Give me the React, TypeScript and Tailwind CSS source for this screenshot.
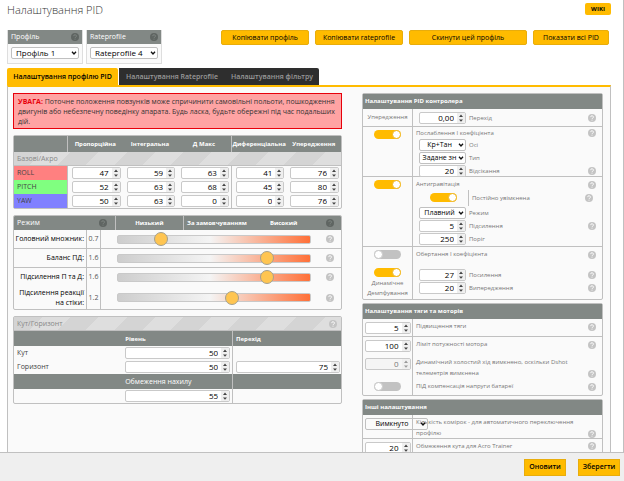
import React from "react";

function Help({ dark = false }: { dark?: boolean }) {
  return (
    <svg viewBox="0 0 16 16" className="block size-2 shrink-0" aria-hidden="true">
      <circle cx="8" cy="8" r="8" fill={dark ? "#5f6562" : "#c4c4c4"} />
      <path
        d="M5.4 6.2a2.7 2.5 0 1 1 4 2.1c-.9.5-1.3.8-1.3 1.6M8 11.4v1.8"
        fill="none"
        stroke={dark ? "#828885" : "#ffffff"}
        strokeWidth="1.9"
      />
    </svg>
  );
}

type NumProps = { id?: string; label?: string; value: string; size?: string; disabled?: boolean };

function Num({ id, label, value, size = "w-full", disabled = false }: NumProps) {
  return (
    <span
      className={`flex h-3 shrink-0 overflow-hidden rounded-xs border border-[#c9c9c9] ${size} ${
        disabled ? "bg-[#f5f5f5] text-[#777]" : "bg-white text-black"
      }`}
    >
      <input
        id={id}
        aria-label={label}
        type="text"
        inputMode="decimal"
        defaultValue={value}
        disabled={disabled}
        className="w-0 min-w-0 flex-1 bg-transparent pr-[3px] text-right text-[8px] leading-[10px] outline-none"
      />
      <svg viewBox="0 0 8 10" className="h-full w-2 bg-[#efefef]" aria-hidden="true">
        <path d="M2 4L4 1.6L6 4zM2 6.4L4 8.8L6 6.4z" fill={disabled ? "#999" : "#444"} />
      </svg>
    </span>
  );
}

type PickProps = { id: string; value: string; size?: string; look?: string };

function Pick({ id, value, size = "w-full", look = "bg-white pl-1 text-left text-[8px]" }: PickProps) {
  return (
    <span className={`relative block h-3 shrink-0 ${size}`}>
      <select
        id={id}
        className={`block h-3 w-full appearance-none overflow-hidden rounded-xs border border-[#c0c0c0] pr-2 leading-[10px] text-black outline-none ${look}`}
      >
        <option>{value}</option>
      </select>
      <svg viewBox="0 0 8 6" className="absolute right-0.5 top-1 h-1 w-1.5" aria-hidden="true">
        <path d="M1 1.2L4 4.4L7 1.2" fill="none" stroke="#111" strokeWidth="2" />
      </svg>
    </span>
  );
}

function Toggle({ id, label, on = false }: { id?: string; label?: string; on?: boolean }) {
  return (
    <span className="relative block h-2.5 w-[27px] shrink-0">
      <input
        id={id}
        aria-label={label}
        type="checkbox"
        defaultChecked={on}
        className="peer block h-[9px] w-[27px] appearance-none rounded-full bg-[#c2c2c2] checked:bg-[#ffbb00]"
      />
      <span className="pointer-events-none absolute left-0 top-0 size-[9px] rounded-full border border-[#c9c9c9] bg-white peer-checked:left-[18px] peer-checked:border-[#eeb41f]" />
    </span>
  );
}

function YellowButton({ children, size }: { children: React.ReactNode; size: string }) {
  return (
    <button
      type="button"
      className={`rounded-xs border border-[#e8ad0c] bg-[#ffbb00] text-center text-[7px] font-medium leading-[13px] text-black ${size}`}
    >
      {children}
    </button>
  );
}

function ProfileBox({ id, title, value }: { id: string; title: string; value: string }) {
  return (
    <div className="w-[76px] border border-t-0 border-[#dedede] bg-[#fafafa]">
      <div className="flex h-[14px] items-center justify-between bg-[#828885] px-[3px]">
        <label htmlFor={id} className="font-medium text-white">{title}</label>
        <Help dark />
      </div>
      <div className="px-[3px] pb-1 pt-[3px]">
        <Pick id={id} value={value} />
      </div>
    </div>
  );
}

const stripes =
  "bg-[repeating-linear-gradient(135deg,#d4d4d4_0_20px,#dedede_20px_40px)] text-[#888]";

const axes = [
  { name: "ROLL", color: "bg-[#ff8080]", values: ["47", "59", "63", "41", "76"] },
  { name: "PITCH", color: "bg-[#80ff80]", values: ["52", "63", "68", "45", "80"] },
  { name: "YAW", color: "bg-[#8080ff]", values: ["50", "63", "0", "0", "76"] },
];
const terms = ["Пропорційна", "Інтегральна", "Д Макс", "Диференціальна", "Упередження"];

function PidTable() {
  return (
    <table className="w-full table-fixed border-separate border-spacing-0 rounded-xs border border-[#c0c0c0] text-left">
      <thead>
        <tr className="h-4 bg-[#828885] text-center text-[6px] text-white">
          <th className="w-[54px] border-r border-[#c0c0c0]" aria-label="Вісь" />
          {terms.map((t) => (
            <th key={t} className={`whitespace-nowrap p-0 font-bold ${t === "Д Макс" ? "border-r border-[#c0c0c0]" : ""}`}>
              {t}
            </th>
          ))}
        </tr>
      </thead>
      <tbody>
        <tr className={`h-[14px] ${stripes}`}>
          <td colSpan={6} className="border-b border-[#c0c0c0] p-0 pl-[3px]">Базові/Акро</td>
        </tr>
        {axes.map((axis) => (
          <tr key={axis.name} className="h-[14px]">
            <th scope="row" className={`border-r border-[#c0c0c0] p-0 pl-[3px] font-normal text-[#444] ${axis.color}`}>{axis.name}</th>
            {axis.values.map((v, i) => (
              <td key={terms[i]} className={`p-0 pl-1 pr-0.5 ${i === 2 ? "border-r border-[#c0c0c0]" : ""}`}>
                <Num value={v} label={`${axis.name} ${terms[i]}`} />
              </td>
            ))}
          </tr>
        ))}
      </tbody>
    </table>
  );
}

const sliders = [
  { name: "Головний множник:", value: "0.7", pos: 20, row: "h-[19px] border-b" },
  { name: "Баланс ПД:", value: "1.6", pos: 80, row: "h-[19px] border-b" },
  { name: "Підсилення П та Д:", value: "1.6", pos: 80, row: "h-[18px]" },
  { name: "Підсилення реакції на стіки:", value: "1.2", pos: 60, row: "h-[23px]" },
];

function SliderPanel() {
  return (
    <div className="overflow-hidden rounded-xs border border-[#c0c0c0]">
      <div className="flex h-[14px] items-center whitespace-nowrap bg-[#828885] text-center text-[6px] font-bold leading-[14px] text-white">
        <div className="flex w-[101px] items-center justify-between pl-[3px] pr-2 text-[7px] font-normal">
          <span>Режим</span>
          <Help dark />
        </div>
        <div className="h-full flex-1 border-l border-[#c0c0c0]">Низький</div>
        <div className="h-full flex-1 border-l border-[#c0c0c0]">За замовчуванням</div>
        <div className="h-full flex-1">Високий</div>
        <div className="flex w-6 justify-end pr-[7px]"><Help dark /></div>
      </div>
      {sliders.map((s, i) => (
        <div key={s.name} className={`flex items-stretch border-[#c0c0c0] ${s.row}`}>
          <label htmlFor={`slider-${i}`} className="flex w-[73px] items-center justify-end border-r border-[#c0c0c0] pr-0.5 text-right leading-[10px] text-black">
            {s.name}
          </label>
          <output className="flex w-[14px] items-center justify-center border-r border-[#c0c0c0] text-[#555]">{s.value}</output>
          <div className="flex flex-1 items-center pl-4 pr-[7px]">
            <input
              id={`slider-${i}`}
              type="range"
              min="0"
              max="100"
              defaultValue={s.pos}
              className="mr-[15px] h-[9px] min-w-0 flex-1 appearance-none rounded-xs border border-[#c9c9c9] bg-[linear-gradient(to_right,#cdcdcd,#f4f4f4_48%,#ff7038)] [&::-webkit-slider-thumb]:size-[14px] [&::-webkit-slider-thumb]:appearance-none [&::-webkit-slider-thumb]:rounded-full [&::-webkit-slider-thumb]:border [&::-webkit-slider-thumb]:border-[#a4a08f] [&::-webkit-slider-thumb]:bg-[#ffc551]"
            />
            <Help />
          </div>
        </div>
      ))}
    </div>
  );
}

function AngleTable() {
  const edge = "border-r border-[#c0c0c0]";
  return (
    <table className="w-full table-fixed border-separate border-spacing-0 rounded-xs border border-[#c0c0c0] text-left">
      <colgroup>
        <col className="w-[34%]" />
        <col className="w-[33%]" />
        <col className="w-[33%]" />
      </colgroup>
      <tbody>
        <tr className={`h-[14px] ${stripes}`}>
          <td colSpan={3} className="border-b border-[#c0c0c0] p-0 pl-[3px] pr-1">
            <div className="flex items-center justify-between">Кут/Горизонт<Help /></div>
          </td>
        </tr>
        <tr className="h-[15px] bg-[#828885] text-[6px] text-white">
          <td />
          <th scope="col" className={`p-0 font-bold ${edge}`}>Рівень</th>
          <th scope="col" className="p-0 pl-[3px] font-bold">Перехід</th>
        </tr>
        <tr className="h-[14px]">
          <th scope="row" className="p-0 pl-[3px] font-normal text-[#444]">Кут</th>
          <td className={`p-0 pr-0.5 ${edge}`}><Num value="50" label="Кут, рівень" /></td>
          <td />
        </tr>
        <tr className="h-[14px]">
          <th scope="row" className="p-0 pl-[3px] font-normal text-[#444]">Горизонт</th>
          <td className={`p-0 pr-0.5 ${edge}`}><Num value="50" label="Горизонт, рівень" /></td>
          <td className="p-0 pl-[3px] pr-px"><Num value="75" label="Горизонт, перехід" /></td>
        </tr>
        <tr className="h-[15px] bg-[#828885] text-white">
          <td />
          <th scope="col" className={`p-0 font-normal ${edge}`}>Обмеження нахилу</th>
          <td />
        </tr>
        <tr className="h-[14px]">
          <td />
          <td className={`p-0 pr-0.5 ${edge}`}><Num value="55" label="Обмеження нахилу" /></td>
          <td />
        </tr>
      </tbody>
    </table>
  );
}

function Panel({ title, children }: { title: string; children: React.ReactNode }) {
  return (
    <section className="rounded-xs border border-[#c0c0c0] text-[6px]">
      <h2 className="h-[15px] bg-[#828885] pl-0.5 font-bold leading-[15px] text-white">{title}</h2>
      {children}
    </section>
  );
}

type RowProps = { left: React.ReactNode; children: React.ReactNode; size: string; line?: boolean };

function Row({ left, children, size, line = true }: RowProps) {
  return (
    <div className={`flex border-[#c0c0c0] ${line ? "border-b" : ""} ${size}`}>
      <div className="flex w-[50px] shrink-0 flex-col items-center gap-y-2 border-r border-[#c0c0c0] pt-[3px]">{left}</div>
      <div className="min-w-0 flex-1 pl-[3px] pr-1.5 pt-[2px]">{children}</div>
    </div>
  );
}

function Line({ children, height = "leading-[11px]" }: { children: React.ReactNode; height?: string }) {
  return (
    <div className={`flex items-end justify-between ${height}`}>
      {children}
      <span className="pb-px"><Help /></span>
    </div>
  );
}

function Field({ id, label, value, pick = false, help = false }: { id: string; label: string; value: string; pick?: boolean; help?: boolean }) {
  return (
    <div className="flex h-[13px] items-center pl-[3px]">
      {pick ? (
        <Pick id={id} value={value} size="w-[47px]" look="bg-white pl-0.5 text-center text-[7px]" />
      ) : (
        <Num id={id} value={value} size="w-[47px]" />
      )}
      <label htmlFor={id} className="flex-1 pl-[3px]">{label}</label>
      {help && <Help />}
    </div>
  );
}

function Controller() {
  return (
    <Panel title="Налаштування PID контролера">
      <Row size="h-[18px]" left={<span className="leading-[11px]">Упередження</span>}>
        <Field id="ff" label="Перехід" value="0,00" help />
      </Row>
      <Row size="h-[50px]" left={<Toggle id="relax" on />}>
        <Line height="leading-[9px]"><label htmlFor="relax">Послаблення I коефіцієнта</label></Line>
        <Field id="relax-axes" label="Осі" value="Кр+Тан" pick />
        <Field id="relax-type" label="Тип" value="Задане зн" pick />
        <Field id="relax-cut" label="Відсікання" value="20" help />
      </Row>
      <Row size="h-[70px]" left={<Toggle label="Антигравітація" on />}>
        <Line>Антигравітація</Line>
        <div className="flex h-4 items-center pl-[14px] pr-[3px]">
          <Toggle id="always" on />
          <label htmlFor="always" className="ml-[11px] flex-1 border-l border-[#c0c0c0] pl-[3px] leading-[16px]">Постійно увімкнена</label>
          <Help />
        </div>
        <Field id="ag-mode" label="Режим" value="Плавний" pick />
        <Field id="ag-gain" label="Підсилення" value="5" help />
        <Field id="ag-limit" label="Поріг" value="250" />
      </Row>
      <Row
        size="h-[52px]"
        line={false}
        left={
          <>
            <Toggle label="Обертання I коефіцієнта" />
            <span className="flex flex-col items-center">
              <Toggle id="damp" on />
              <label htmlFor="damp" className="text-center leading-[10px]">Динамічне Демпфування</label>
            </span>
          </>
        }
      >
        <div className="mb-2"><Line>Обертання I коефіцієнта</Line></div>
        <Field id="d-gain" label="Посилення" value="27" help />
        <Field id="d-adv" label="Випередження" value="20" help />
      </Row>
    </Panel>
  );
}

function Motors() {
  return (
    <Panel title="Налаштування тяги та моторів">
      <Row size="h-[18px]" left={<Num id="boost" value="5" size="w-[46px]" />}>
        <Line><label htmlFor="boost">Підвищення тяги</label></Line>
      </Row>
      <Row size="h-[18px]" line={false} left={<Num id="limit" value="100" size="w-[46px]" />}>
        <Line><label htmlFor="limit">Ліміт потужності мотора</label></Line>
      </Row>
      <Row size="h-6" line={false} left={<Num id="idle" value="0" size="w-[46px]" disabled />}>
        <Line><label htmlFor="idle">Динамічний холостий хід вимкнено, оскільки Dshot телеметрія вимкнена</label></Line>
      </Row>
      <Row size="h-4" line={false} left={<Toggle id="comp" />}>
        <Line><label htmlFor="comp">ПІД компенсація напруги батареї</label></Line>
      </Row>
    </Panel>
  );
}

function Misc() {
  return (
    <Panel title="Інші налаштування">
      <Row
        size="h-6"
        left={
          <div className="w-[46px]">
            <Pick id="cells" value="Вимкнуто" size="w-[63px]" look="bg-transparent text-center text-[7px]" />
          </div>
        }
      >
        <Line><label htmlFor="cells">Кількість комірок - для автоматичного переключення профілю</label></Line>
      </Row>
      <Row size="h-[18px]" left={<Num id="trainer" value="20" size="w-[46px]" />}>
        <Line height="leading-[10px]"><label htmlFor="trainer">Обмеження кута для Acro Trainer</label></Line>
      </Row>
    </Panel>
  );
}

export default function App() {
  return (
    <div className="flex h-screen flex-col overflow-hidden bg-white font-['Open_Sans','Noto_Sans',sans-serif] text-[7px] leading-[10px] text-[#777]">
      <main className="flex min-h-0 flex-1 flex-col overflow-hidden border-r border-[#c0c0c0] pl-[7px] pr-3">
        <header className="flex h-[30px] shrink-0 items-start justify-between pt-[3px]">
          <h1 className="text-[11px] font-light leading-[14px] text-[#333]">Налаштування PID</h1>
          <button type="button" className="h-3 w-[26px] rounded-xs bg-[#ffbb00] text-[6px] font-bold leading-[12px] text-black">WIKI</button>
        </header>
        <div className="flex h-[38px] shrink-0 items-start gap-[3px]">
          <ProfileBox id="profile" title="Профіль" value="Профіль 1" />
          <ProfileBox id="rate" title="Rateprofile" value="Rateprofile 4" />
          <div className="ml-auto flex gap-1.5 pr-0.5">
            <YellowButton size="w-[88px]">Копіювати профіль</YellowButton>
            <YellowButton size="w-[88px]">Копіювати rateprofile</YellowButton>
            <YellowButton size="w-[118px]">Скинути цей профіль</YellowButton>
            <YellowButton size="w-[76px]">Показати всі PID</YellowButton>
          </div>
        </div>
        <nav className="flex h-[17px] shrink-0 font-semibold leading-[17px]">
          <a href="#pid" className="mr-px w-[111px] rounded-t-xs bg-[#ffbb00] text-center text-black">Налаштування профілю PID</a>
          <a href="#rate" className="w-[106px] bg-[#2e2e2e] text-center text-[#999]">Налаштування Rateprofile</a>
          <a href="#filter" className="w-[94px] rounded-tr-xs bg-[#2e2e2e] text-center text-[#999]">Налаштування фільтру</a>
        </nav>
        <div className="grid min-h-0 flex-1 grid-cols-[329fr_241fr] items-start gap-x-5 border-x border-t-2 border-[#c0c0c0] border-t-[#ffbb00] bg-[#fafafa] pl-[5px] pr-[7px] pt-1.5">
          <div className="flex min-w-0 flex-col gap-1.5">
            <p className="h-9 border border-red-600 bg-[#ffa3a3] px-1 pt-[3px] text-[#333]">
              <strong className="text-red-600">УВАГА:</strong> Поточне положення повзунків може спричинити самовільні польоти, пошкодження двигунів або небезпечну поведінку апарата. Будь ласка, будьте обережні під час подальших дій.
            </p>
            <PidTable />
            <SliderPanel />
            <AngleTable />
          </div>
          <div className="flex min-w-0 flex-col gap-[3px]">
            <Controller />
            <Motors />
            <Misc />
          </div>
        </div>
      </main>
      <footer className="flex h-[29px] shrink-0 items-center justify-end gap-3 border-t border-[#c0c0c0] bg-[#efefef] pr-1">
        <button type="button" className="h-[17px] w-[42px] border border-[#e8ad0c] bg-[#ffbb00] font-semibold text-black">Оновити</button>
        <button type="button" className="h-[17px] w-[42px] border border-[#e8ad0c] bg-[#ffbb00] font-semibold text-black">Зберегти</button>
      </footer>
    </div>
  );
}
